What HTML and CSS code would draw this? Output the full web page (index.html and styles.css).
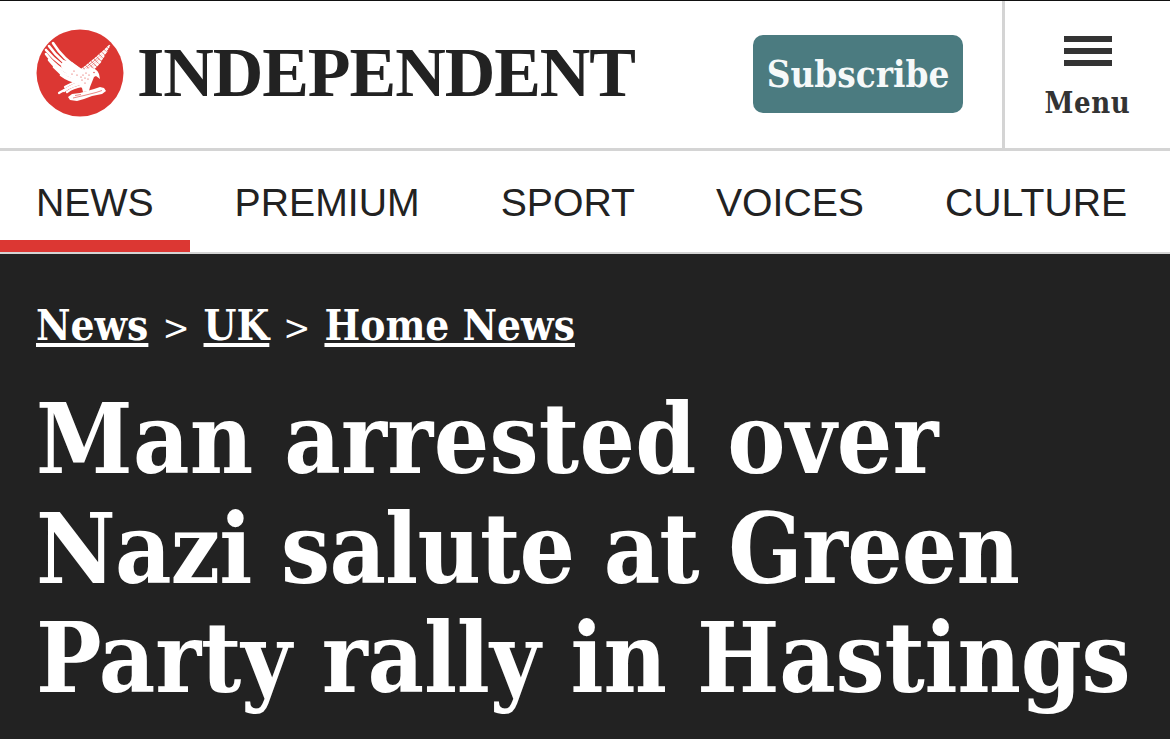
FILE: index.html
```html
<!DOCTYPE html>
<html>

<head>
    <title>Independent</title>
    <meta name="viewport" content="width=device-width, initial-scale=1.0">
    <link rel="stylesheet" href="styles.css">
</head>

<body>
    <header class="masthead">
        <a class="brand" href="#">
            <svg class="brand-logo" viewBox="0 0 88 88" width="88" height="88">
                <circle cx="44" cy="44" r="43.5" fill="#dc3733" />
                <!-- left wing feathers -->
                <g fill="none" stroke="#fff" stroke-width="2.6" stroke-linecap="round">
                    <path d="M46 42C36 36 25 27 17 14" />
                    <path d="M45 44C33 38 22 30 13 17" />
                    <path d="M44 46C32 41 20 33 10 21" />
                    <path d="M44 48C31 45 19 37 10 25" />
                    <path d="M44 50C32 48 21 41 13 31" />
                    <path d="M45 52C34 51 25 46 18 38" />
                    <path d="M46 54C37 53 30 50 25 46" />
                </g>
                <!-- thick root of the wing, next to the body -->
                <path fill="#fff" d="M47 41L36 33 27 31 25 38 33 47 46 55z" />
                <!-- right wing feathers, finer towards the tip -->
                <g fill="none" stroke="#fff" stroke-width="1.6" stroke-dasharray="3 0.5">
                    <path d="M45 41C54 34 64 26 74 16" />
                    <path d="M46 42C55 36 64 29 73 18" />
                    <path d="M47 43C56 38 64 31 71 22" />
                    <path d="M48 44C56 40 63 34 68 27" />
                    <path d="M49 45C56 42 61 37 65 32" />
                </g>
                <!-- tail -->
                <g fill="none" stroke="#fff" stroke-width="2.2" stroke-linecap="round">
                    <path d="M44 53C38 55 30 60 23 64" />
                    <path d="M45 55C39 56 34 58 28 62" />
                    <path d="M46 57C40 58 35 60 31 63" />
                    <path d="M43 52C38 53 34 55 29 58" />
                </g>
                <!-- body and head -->
                <path fill="#fff" d="M43 44L49 40 55 39C59 39 62 42 63 45L64 50 60 47 58 48 56 53 54 58 53 62 47 63 46 59 43 56 41 50z" />
                <!-- stipple on the body -->
                <g fill="#dc3733">
                    <circle cx="47" cy="46" r=".6" /><circle cx="50" cy="44" r=".6" /><circle cx="53" cy="46" r=".6" />
                    <circle cx="49" cy="49" r=".6" /><circle cx="52" cy="50" r=".6" /><circle cx="46" cy="51" r=".6" />
                    <circle cx="49" cy="54" r=".6" /><circle cx="45" cy="48" r=".6" /><circle cx="58" cy="43.500" r=".7" />
                    <circle cx="38" cy="42" r=".6" /><circle cx="41" cy="46" r=".6" /><circle cx="36" cy="45" r=".6" />
                </g>
                <!-- branch -->
                <path fill="#fff" d="M51 62L58 60 64 58 68 59 70 62 66 65 56 67 48 70 41 72 34 71 32 68 36 65 44 64z" />
                <path fill="none" stroke="#dc3733" stroke-width=".6" d="M37 69L48 66.500 60 63.500 66 61.500M39 66.500L45 65.500" />
            </svg>
            <span class="brand-name">INDEPENDENT</span>
        </a>
        <a class="subscribe" href="#">Subscribe</a>
        <button class="menu-btn" type="button">
            <span class="burger"><i></i><i></i><i></i></span>
            <span class="menu-label">Menu</span>
        </button>
    </header>

    <nav class="main-nav">
        <a class="nav-item active" href="#">NEWS</a>
        <a class="nav-item" href="#">PREMIUM</a>
        <a class="nav-item" href="#">SPORT</a>
        <a class="nav-item" href="#">VOICES</a>
        <a class="nav-item" href="#">CULTURE</a>
    </nav>

    <main class="hero">
        <div class="crumbs">
            <a href="#">News</a><span class="sep">&gt;</span><a href="#">UK</a><span class="sep">&gt;</span><a href="#">Home News</a>
        </div>
        <h1>
            <span class="line line-one">Man arrested over</span>
            <span class="line line-two">Nazi salute at Green</span>
            <span class="line line-three">Party rally in Hastings</span>
        </h1>
    </main>
</body>

</html>
```

FILE: styles.css
```css
html,
body {
    height: 100%;
}

body {
    margin: 0;
    display: flex;
    flex-direction: column;
    overflow: hidden;
    background-color: #222;
    font-family: "DejaVu Serif Condensed", "DejaVu Serif", serif;
}

a {
    color: inherit;
}

.masthead {
    display: flex;
    align-items: stretch;
    flex: none;
    height: 151px;
    box-sizing: border-box;
    background-color: #fff;
    border-top: 1px solid #111;
    border-bottom: 3px solid #d4d4d4;
}

.brand {
    display: flex;
    align-items: center;
    gap: 13px;
    width: 753px;
    padding: 0 0 3px 36px;
    box-sizing: border-box;
    color: #222;
    text-decoration: none;
}

.brand-logo {
    flex: none;
}

.brand-name {
    font-family: "Liberation Serif", serif;
    font-size: 70px;
    font-weight: bold;
    letter-spacing: -1.05px;
    line-height: 1;
}

.subscribe {
    align-self: flex-start;
    width: 210px;
    height: 78px;
    margin-top: 34px;
    display: flex;
    align-items: center;
    justify-content: center;
    background-color: #4b7b80;
    border-radius: 10px;
    color: #f6f9f9;
    font-size: 36.5px;
    font-weight: bold;
    text-decoration: none;
}

.menu-btn {
    margin-left: 39px;
    flex: 1;
    padding: 35px 0 0;
    display: flex;
    flex-direction: column;
    align-items: center;
    background: none;
    border: none;
    border-left: 3px solid #d4d4d4;
    color: #333;
    font-family: inherit;
}

.burger {
    display: flex;
    flex-direction: column;
    gap: 6px;
    width: 48px;
}

.burger i {
    display: block;
    height: 6px;
    background-color: #333;
}

.menu-label {
    margin-top: 22px;
    font-size: 29px;
    font-weight: bold;
    letter-spacing: 0.6px;
    line-height: 30px;
}

.main-nav {
    display: flex;
    flex: none;
    height: 103px;
    box-sizing: border-box;
    background-color: #fff;
    border-bottom: 2px solid #d4d4d4;
}

.nav-item {
    padding: 29px 36px 0;
    margin-right: 9px;
    color: #222;
    font-family: "Liberation Sans", sans-serif;
    font-size: 39.2px;
    line-height: 45px;
    text-decoration: none;
    white-space: nowrap;
}

.nav-item.active {
    border-bottom: 12px solid #dc3733;
}

.hero {
    flex: 1;
    padding: 46px 0 0 36px;
    color: #fff;
}

.crumbs {
    font-size: 42px;
    font-weight: bold;
    line-height: 52px;
}

.sep {
    margin: 0 14px;
    font-size: 36px;
    font-weight: normal;
}

h1 {
    margin: 31px 0 0;
    font-size: 97px;
    font-weight: bold;
    line-height: 109.5px;
    white-space: nowrap;
}

.line {
    display: block;
}

.line-one {
    letter-spacing: 0.3px;
}

.line-two {
    letter-spacing: -0.85px;
}

.line-three {
    letter-spacing: -0.2px;
}
```
